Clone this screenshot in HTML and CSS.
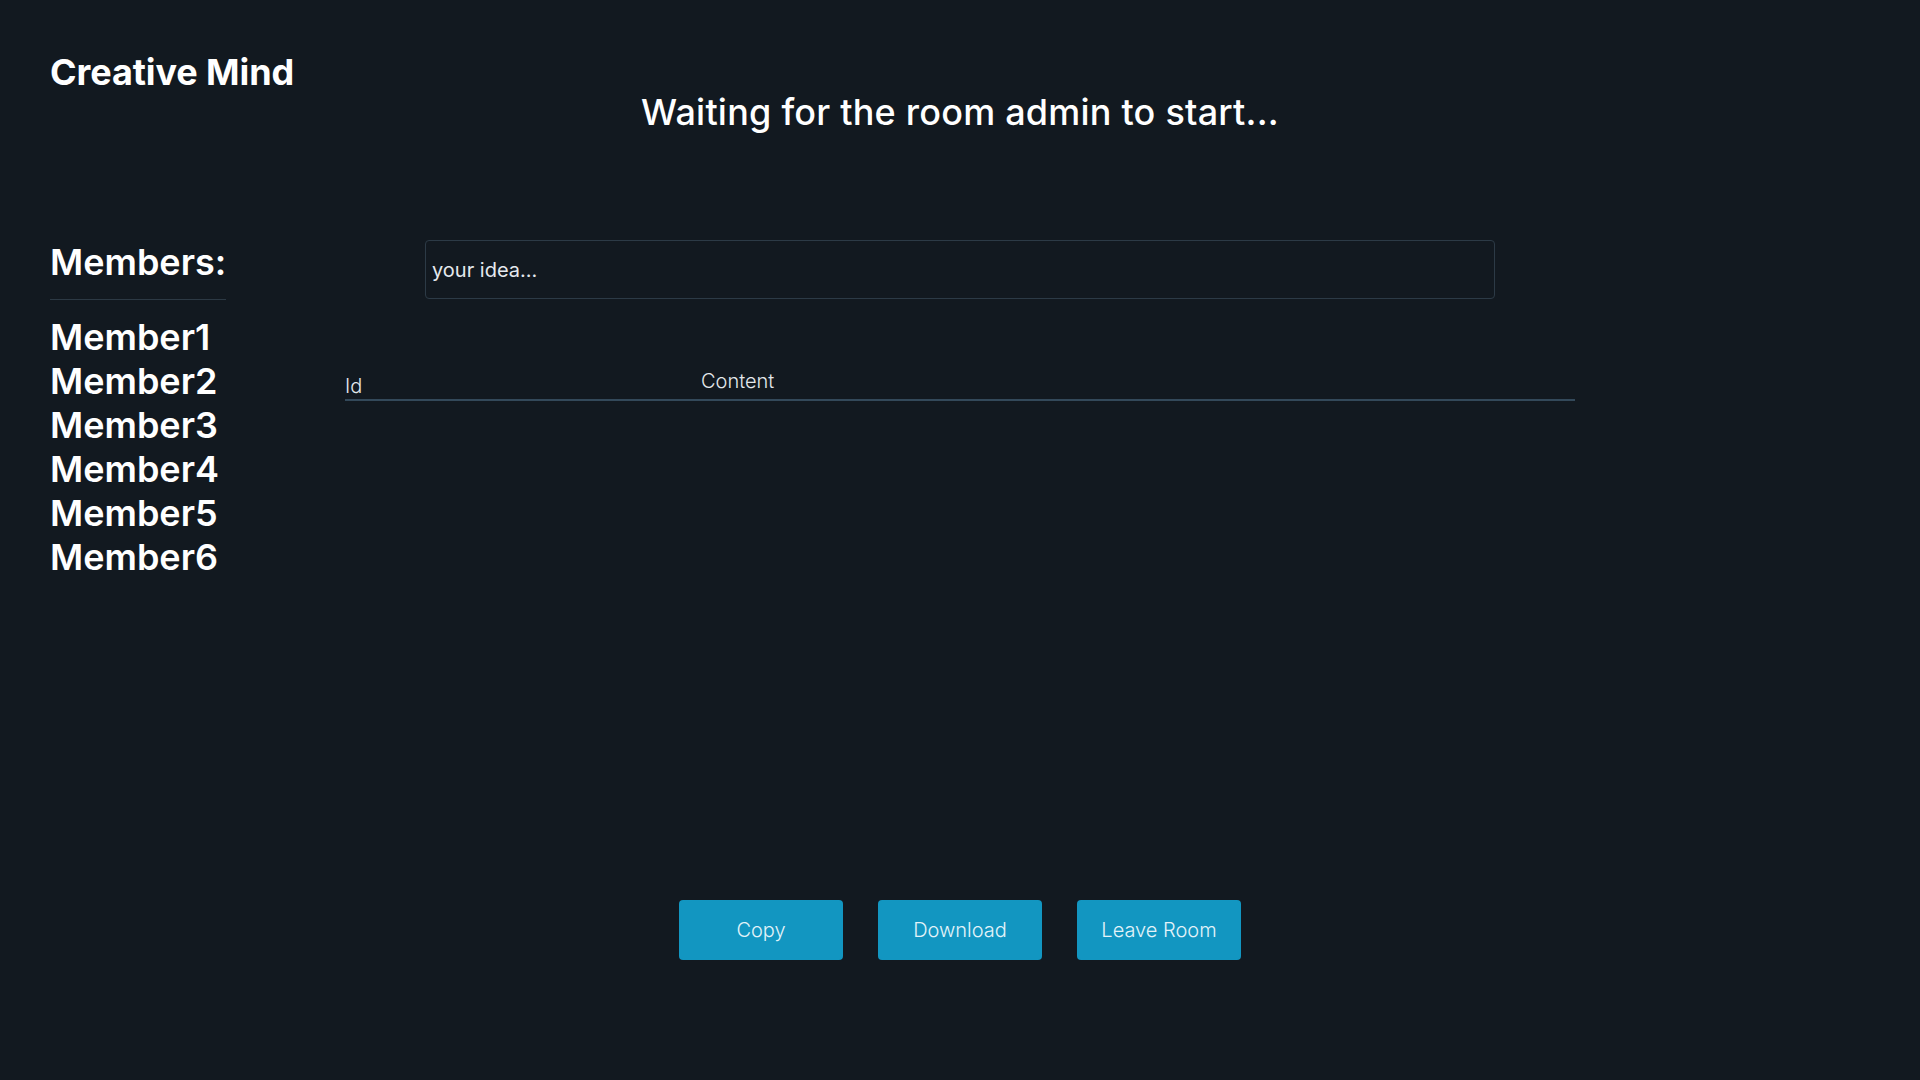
FILE: index.html
```html
<!DOCTYPE html>
<html lang="en">
<head>
<meta charset="utf-8">
<title>Creative Mind</title>
<link rel="stylesheet" href="styles.css">
</head>
<body>
<div class="page">
  <header class="header">
    <div class="brand">Creative Mind</div>
    <h1 class="status">Waiting for the room admin to start...</h1>
  </header>
  <div class="content">
    <aside class="sidebar">
      <h2 class="members-title">Members:</h2>
      <ul class="members">
        <li>Member1</li>
        <li>Member2</li>
        <li>Member3</li>
        <li>Member4</li>
        <li>Member5</li>
        <li>Member6</li>
      </ul>
    </aside>
    <main class="main">
      <input class="idea-input" type="text" placeholder="your idea...">
      <div class="table">
        <div class="table-head">
          <div class="th th-id">Id</div>
          <div class="th th-content">Content</div>
        </div>
      </div>
    </main>
  </div>
  <div class="actions">
    <button class="btn">Copy</button>
    <button class="btn">Download</button>
    <button class="btn">Leave Room</button>
  </div>
</div>
</body>
</html>
```
FILE: styles.css
```css
* { box-sizing: border-box; }
html, body {
  margin: 0;
  padding: 0;
  background: #121920;
}
body {
  font-family: Inter, "Noto Sans", sans-serif;
  color: #ffffff;
  width: 1920px;
  height: 1080px;
  overflow: hidden;
}
.page {
  padding-top: 51px;
}
.header {
  padding: 0 50px;
}
.brand {
  font-size: 36px;
  line-height: 1.2;
  font-weight: 700;
  letter-spacing: -0.1px;
}
.status {
  margin: -3px 0 0;
  font-size: 36px;
  line-height: 1.2;
  font-weight: 500;
  letter-spacing: 0.22px;
  text-align: center;
}
.content {
  margin-top: 106px;
  display: grid;
  grid-template-columns: 1fr 1230px 1fr;
  min-height: 660px;
}
.sidebar {
  padding-left: 50px;
}
.members-title {
  display: inline-block;
  margin: 1px 0 0;
  font-size: 36px;
  line-height: 1.2;
  font-weight: 600;
  padding-bottom: 14px;
  border-bottom: 1px solid #2c3944;
}
.members {
  list-style: none;
  margin: 15px 0 0;
  padding: 0;
  font-size: 36px;
  line-height: 44px;
  font-weight: 600;
}
.main {
  display: flex;
  flex-direction: column;
  align-items: center;
}
.idea-input {
  width: 1070px;
  height: 59px;
  background: transparent;
  border: 1px solid #2c3a46;
  border-radius: 4px;
  padding: 0 6px;
  font-family: Inter, "Noto Sans", sans-serif;
  font-size: 20px;
  color: #e5e9ee;
  outline: none;
}
.idea-input::placeholder {
  color: #e5e9ee;
  opacity: 1;
}
.table {
  width: 100%;
  margin-top: 70px;
}
.table-head {
  display: grid;
  grid-template-columns: 356px 1fr;
  align-items: end;
  border-bottom: 2px solid #33495a;
  font-size: 20px;
  line-height: 24px;
  font-weight: 300;
  color: #e4e8ec;
}
.th-id { padding-bottom: 1px; }
.th-content { padding-bottom: 6px; }
.actions {
  display: flex;
  justify-content: center;
  gap: 35px;
}
.btn {
  width: 164px;
  height: 60px;
  border: none;
  border-radius: 4px;
  background: #1296c1;
  color: #e3f3f9;
  font-family: Inter, "Noto Sans", sans-serif;
  font-size: 20px;
  font-weight: 300;
  cursor: pointer;
}
```
